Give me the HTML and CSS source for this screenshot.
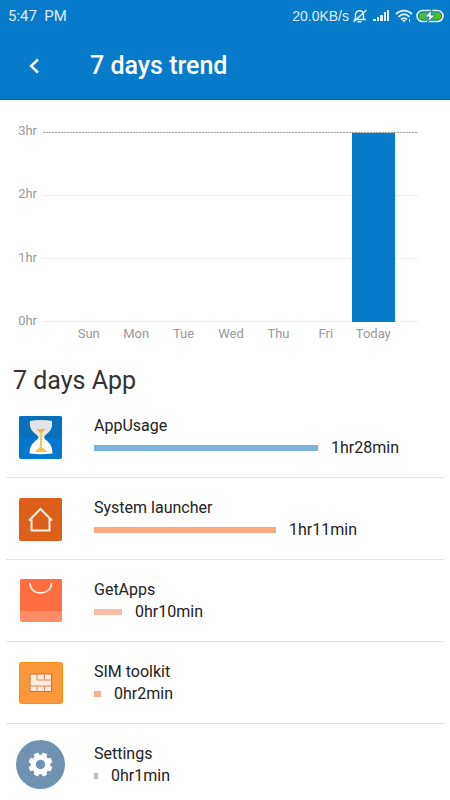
FILE: index.html
```html
<!DOCTYPE html>
<html lang="en">
<head>
    <meta charset="UTF-8">
    <meta name="viewport" content="width=device-width, initial-scale=1.0">
    <title>7 days trend</title>
    <link rel="stylesheet" href="styles.css">
</head>
<body>

    <header class="header">
        <div class="status-bar">
            <span class="clock">5:47&nbsp; PM</span>
            <span class="speed">20.0KB/s</span>
            <svg class="status-icon" width="16" height="16" viewBox="0 0 16 16" fill="none" stroke="currentColor" stroke-width="1.5">
                <path d="M3.500 11V7C3.500 4.500 5 2.800 7.500 2.800S11.500 4.500 11.500 7v4M1.500 11.500H14M5.500 13.700h4M1.500 14L14.500 2"/>
            </svg>
            <svg class="status-icon signal" width="17" height="16" viewBox="0 0 17 16" fill="currentColor">
                <path d="M0 11h3v2H0zM4 9h2v4H4zM7 7h3v6H7zM11 4h2v9h-2zM14 2h2v11h-2z"/>
            </svg>
            <svg class="status-icon wifi" width="18" height="16" viewBox="0 0 18 16" fill="none" stroke="currentColor" stroke-width="1.8">
                <path d="M1 6C5.500 1.500 12.500 1.500 17 6M3.500 8.800C7 5.500 11 5.500 14.500 8.800M6 11.500c2-1.800 4-1.800 6 0"/>
                <path d="M7 12h4L9 14.500z" fill="currentColor" stroke="none"/>
                <path d="M14.500 11v3" stroke-width="1"/>
            </svg>
            <svg class="status-icon" width="28" height="16" viewBox="0 0 28 16">
                <rect x="1" y="2.500" width="26" height="11" rx="5.500" fill="none" stroke="#e4f0f9" stroke-width="1.600"/>
                <rect x="3" y="4.500" width="22" height="7" rx="3.500" fill="#4fc414"/>
                <path d="M16 1.500L8.500 9h4.500l-1.500 5.500L19.500 7H15z" fill="#fff" stroke="#067bca" stroke-width="1"/>
            </svg>
        </div>
        <div class="app-bar">
            <button type="button" class="back-button" aria-label="Back">
                <svg width="14" height="18" viewBox="0 0 14 18" fill="none" stroke="currentColor" stroke-width="2.4">
                    <path d="M11 2.500L4 9l7 6.500"/>
                </svg>
            </button>
            <h1 class="title">7 days trend</h1>
        </div>
    </header>

    <main>
        <section class="chart">
            <div class="y-axis">
                <span>3hr</span>
                <span>2hr</span>
                <span>1hr</span>
                <span>0hr</span>
            </div>
            <div class="plot">
                <div class="grid-lines">
                    <div class="line limit"></div>
                    <div class="line"></div>
                    <div class="line"></div>
                    <div class="line base"></div>
                </div>
                <div class="bars">
                    <div class="bar" style="height: 0%"></div>
                    <div class="bar" style="height: 0%"></div>
                    <div class="bar" style="height: 0%"></div>
                    <div class="bar" style="height: 0%"></div>
                    <div class="bar" style="height: 0%"></div>
                    <div class="bar" style="height: 0%"></div>
                    <div class="bar" style="height: 100%"></div>
                </div>
            </div>
            <div class="x-axis">
                <span>Sun</span>
                <span>Mon</span>
                <span>Tue</span>
                <span>Wed</span>
                <span>Thu</span>
                <span>Fri</span>
                <span>Today</span>
            </div>
        </section>

        <h2 class="section-title">7 days App</h2>
        <ul class="app-list">
            <li class="app">
                <svg class="app-icon" viewBox="0 0 50 50">
                    <rect x="3" y="4" width="43" height="43" rx="2" fill="#0078d0"/>
                    <path d="M5 4h39a2 2 0 0 1 2 2v20H3V6a2 2 0 0 1 2-2z" fill="#086fb9"/>
                    <path d="M14 9q11-1.500 22 0c.5 7-2 10.500-6 13.500-2.500 1.800-2.500 3.700 0 5.500 4.500 3.500 6.500 7 6.500 13.500q-11.500 1.500-23 0c0-6.500 2.500-10 7-13.500 2.500-1.800 2.500-3.700 0-5.500C16 19.500 13.500 16 14 9z" fill="#fff"/>
                    <path d="M14 9q11-1.500 22 0c.5 7-2 10.500-6 13.500-1 .8-1.700 1.600-1.800 2.500h-5.900c-.1-.9-.8-1.700-1.800-2.500C16 19.500 13.500 16 14 9z" fill="#e4e4e6"/>
                    <path d="M20.500 17h9l-3.500 4v14l6 5H18.500l5.500-5V21z" fill="#fac253"/>
                    <path d="M20.500 17h9l-3 3h-3z" fill="#f2b05c"/>
                </svg>
                <div class="app-info">
                    <span class="app-name">AppUsage</span>
                    <div class="usage">
                        <div class="usage-bar blue" style="width: 64%"></div>
                        <span class="time">1hr28min</span>
                    </div>
                </div>
            </li>
            <li class="app">
                <svg class="app-icon" viewBox="0 0 50 50">
                    <rect x="3" y="4" width="43" height="43" rx="2" fill="#de5e1b"/>
                    <path d="M13 26.500L24.500 15 36 26.500M15.500 24.500v12h18v-12" fill="none" stroke="#fff1e8" stroke-width="2"/>
                </svg>
                <div class="app-info">
                    <span class="app-name">System launcher</span>
                    <div class="usage">
                        <div class="usage-bar orange" style="width: 52%"></div>
                        <span class="time">1hr11min</span>
                    </div>
                </div>
            </li>
            <li class="app">
                <svg class="app-icon" viewBox="0 0 50 50">
                    <rect x="4" y="3" width="42" height="43" rx="2" fill="#ff8c66"/>
                    <path d="M6 3h38a2 2 0 0 1 2 2v30H4V5a2 2 0 0 1 2-2z" fill="#ff6e40"/>
                    <path d="M14 7c0 6 4.500 10 10.500 10S35.500 13 35.500 7" fill="none" stroke="#fff1e8" stroke-width="1.600"/>
                </svg>
                <div class="app-info">
                    <span class="app-name">GetApps</span>
                    <div class="usage">
                        <div class="usage-bar peach" style="width: 8%"></div>
                        <span class="time">0hr10min</span>
                    </div>
                </div>
            </li>
            <li class="app">
                <svg class="app-icon" viewBox="0 0 50 50">
                    <rect x="3.500" y="4.500" width="43" height="41" rx="2" fill="#fc983b" stroke="#fb8f12"/>
                    <path d="M14 16h21.500v17.500H14z" fill="#feeade" stroke="#dc6c1d"/>
                    <path d="M21 16v6H35.500M28.500 16v6M14 28H35.500M21 28v5.500M28.500 28v5.500" fill="none" stroke="#e58a58"/>
                </svg>
                <div class="app-info">
                    <span class="app-name">SIM toolkit</span>
                    <div class="usage">
                        <div class="usage-bar salmon" style="width: 2%"></div>
                        <span class="time">0hr2min</span>
                    </div>
                </div>
            </li>
            <li class="app">
                <svg class="app-icon" viewBox="0 0 50 50">
                    <circle cx="24.500" cy="24.500" r="24.500" fill="#7092b2"/>
                    <g fill="#fff" transform="translate(-.5 -.5)">
                        <circle cx="25" cy="25" r="9.700"/>
                        <path id="tooth" d="M22 17l.7-4h4.600l.7 4v16l-.7 4h-4.600l-.7-4z" transform="rotate(22.500 25 25)"/>
                        <use href="#tooth" transform="rotate(45 25 25)"/>
                        <use href="#tooth" transform="rotate(90 25 25)"/>
                        <use href="#tooth" transform="rotate(135 25 25)"/>
                    </g>
                    <circle cx="24.500" cy="24.500" r="4.700" fill="#7092b2"/>
                </svg>
                <div class="app-info">
                    <span class="app-name">Settings</span>
                    <div class="usage">
                        <div class="usage-bar gray" style="width: 1%"></div>
                        <span class="time">0hr1min</span>
                    </div>
                </div>
            </li>
        </ul>
    </main>

</body>
</html>
```
FILE: styles.css
```css
:root {
    --blue: #067bca;
    --line: #e4e4e4;
}
* { box-sizing: border-box; margin: 0; padding: 0; }
body {
    font-family: Roboto, "Liberation Sans", sans-serif;
    background-color: #fff;
    color: #222;
    overflow-x: hidden;
}
.header {
    background-color: var(--blue);
    border-bottom: 1px solid #0568b4;
    color: #fff;
}
.status-bar {
    display: flex;
    align-items: center;
    height: 32px;
    padding: 0 6px 0 8px;
    color: #dcecf8;
    font-size: 15px;
}
.clock { margin-right: auto; }
.speed {
    font-family: "Liberation Sans", Arial, sans-serif;
    font-size: 14px;
}
.status-icon { margin-left: 3px; }
.signal, .wifi { margin-left: 5px; }
.app-bar {
    display: flex;
    align-items: center;
    height: 67px;
    padding-left: 16px;
}
.back-button {
    display: flex;
    align-items: center;
    justify-content: center;
    width: 36px;
    height: 36px;
    border: none;
    background: none;
    color: #fff;
    cursor: pointer;
}
.title {
    margin-left: 38px;
    font-size: 25px;
    font-weight: 500;
}

/* Chart */
.chart {
    display: grid;
    grid-template-columns: 37px 1fr;
    column-gap: 6px;
    padding: 23px 32px 0 0;
    font-size: 13px;
    line-height: 16px;
    color: #999;
}
.y-axis {
    display: flex;
    flex-direction: column;
    justify-content: space-between;
    height: 206px;
    grid-row: 1 / 3;
    text-align: right;
}
.plot {
    display: grid;
    height: 190px;
    margin-top: 9px;
}
.grid-lines, .bars { grid-area: 1 / 1; }
.grid-lines {
    display: flex;
    flex-direction: column;
    justify-content: space-between;
}
.line {
    height: 1px;
    background: repeating-linear-gradient(90deg, #ececec 0 3px, #fff 3px 4px);
}
.line.limit { background: repeating-linear-gradient(90deg, #a4a4a4 0 2px, #dedede 2px 3px); }
.line.base { background: #ececec; }
.bars, .x-axis {
    display: grid;
    grid-template-columns: repeat(7, 1fr);
    padding: 0 21px 0 22px;
}
.bars {
    align-items: end;
    padding-top: 1px;
}
.bar {
    margin: 0 2px;
    background-color: var(--blue);
}
.x-axis {
    grid-column: 2;
    margin-top: 4px;
    text-align: center;
}

/* App list */
.section-title {
    margin-top: 24px;
    padding-left: 13px;
    font-size: 25px;
    font-weight: 400;
    line-height: 30px;
    color: #333;
}
.app-list {
    padding: 0 6px;
    list-style: none;
}
.app {
    display: flex;
    align-items: center;
    height: 82px;
    padding-left: 10px;
    border-bottom: 1px solid var(--line);
}
.app:last-child { border-bottom: none; }
.app-icon {
    flex: none;
    width: 50px;
    height: 50px;
}
.app-info {
    flex: 1;
    margin-left: 28px;
    line-height: 22px;
    font-size: 16px;
}
.usage {
    display: flex;
    align-items: center;
}
.usage-bar {
    flex: none;
    min-width: 4px;
    height: 6px;
}
.blue { background-color: #7bb3dc; }
.orange { background-color: #fca880; }
.peach { background-color: #f9bfa6; }
.salmon { background-color: #f4b095; }
.gray { background-color: #bdbdbd; }
.time { margin-left: 13px; }
```
